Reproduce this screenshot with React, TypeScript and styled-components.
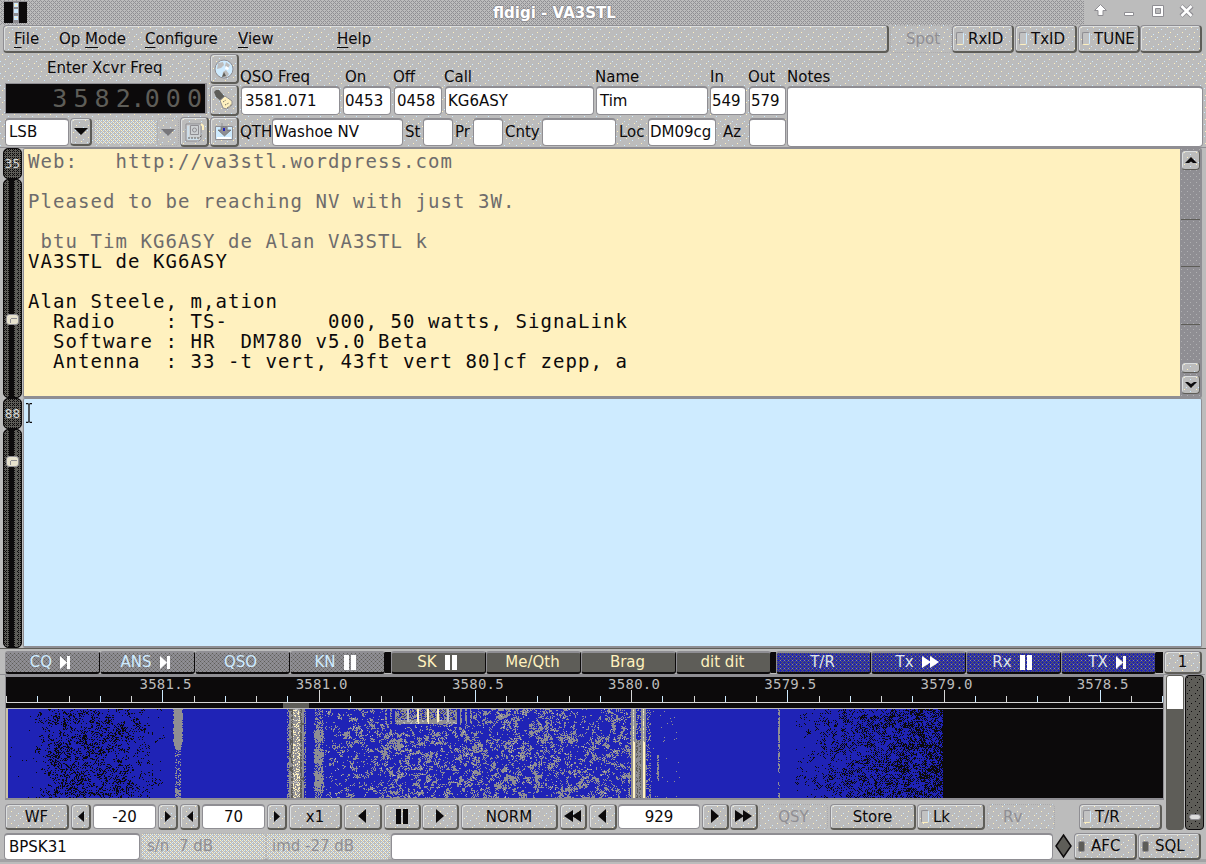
import React from "react";
import styled, { createGlobalStyle, css } from "styled-components";

const C = {
  face: "#bcbcbc",
  mid: "#8f8e93",
  dark: "#5e5d58",
  black: "#0c0a0b",
  cream: "#fff1bf",
  ice: "#ceebff",
  blue: "#1f23b6",
};

/* one-pixel dot inside an n x n repeating tile */
const dot = (color: string, x: number, y: number, n: number) =>
  `conic-gradient(from 270deg at 1px 1px, ${color} 90deg, transparent 0) ${x}px ${y}px / ${n}px ${n}px`;

const sparkle = [
  dot(C.cream, 2, 1, 12),
  dot(C.ice, 8, 3, 12),
  dot(C.cream, 5, 6, 12),
  dot(C.ice, 0, 8, 12),
  dot(C.cream, 10, 10, 12),
  dot(C.ice, 4, 11, 12),
].join(", ");

const mutedDither = [
  dot(C.cream, 0, 0, 4),
  dot(C.ice, 2, 0, 4),
  dot(C.ice, 0, 2, 4),
  dot(C.cream, 2, 2, 4),
  dot("#dfe3e4", 1, 1, 4),
  dot("#e6e3d6", 3, 3, 4),
].join(", ");

const titleDither = `${dot("#97979a", 0, 0, 4)}, ${dot("#97979a", 2, 2, 4)}, ${dot(C.mid, 1, 1, 2)}`;
const darkDither = `${dot(C.black, 0, 0, 2)}, ${dot(C.black, 1, 1, 4)}`;

const Global = createGlobalStyle`
  * { box-sizing: border-box; }
  body { margin: 0; background: ${C.face}; overflow: hidden; }
`;

const Window = styled.div`
  width: 1206px;
  height: 864px;
  display: flex;
  flex-direction: column;
  overflow: hidden;
  background: ${C.face};
  font: 15px "DejaVu Sans", sans-serif;
  color: ${C.black};
  white-space: pre;
`;

const TitleBar = styled.header`
  height: 25px;
  flex: none;
  display: flex;
  padding-left: 4px;
  background: ${titleDither}, ${C.face};
`;
const AppIcon = styled.svg`
  display: block;
  flex: none;
`;
const Title = styled.h1`
  margin: 0 0 0 466px;
  flex: 1;
  font: bold 15px/27px "DejaVu Sans", sans-serif;
  color: #fff;
  text-shadow: 1px 0 ${C.mid}, -1px 0 ${C.mid}, 0 1px ${C.mid}, 0 -1px ${C.mid};
`;
const WindowControls = styled.div`
  width: 122px;
  background: ${C.face};
`;

const raised = css`
  border: 1px solid ${C.mid};
  border-right: 2px solid ${C.dark};
  border-bottom: 2px solid ${C.dark};
  border-radius: 4px;
  box-shadow: inset 1px 1px 0 #dcdfe0;
  background: ${sparkle}, ${C.face};
`;

const MenuRow = styled.nav`
  height: 28px;
  flex: none;
  display: flex;
  padding-left: 3px;
`;
const MenuBar = styled.div`
  ${raised}
  width: 886px;
  margin-right: 1px;
  display: flex;
  line-height: 27px;
`;
const MenuItem = styled.span<{ $w: number }>`
  width: ${(p) => p.$w}px;
  u {
    text-underline-offset: 3px;
    text-decoration-thickness: 1px;
    text-decoration-skip-ink: none;
  }
`;

const Button = styled.button<{
  $w: number;
  $ml?: number;
  $h?: number;
  $disabled?: boolean;
  $left?: boolean;
}>`
  ${raised}
  width: ${(p) => p.$w}px;
  height: ${(p) => p.$h ?? 26}px;
  margin: 0 0 0 ${(p) => p.$ml ?? 2}px;
  padding: 0 0 0 ${(p) => (p.$left ? 3 : 0)}px;
  flex: none;
  display: flex;
  align-items: center;
  justify-content: ${(p) => (p.$left ? "flex-start" : "center")};
  gap: 4px;
  font: 15px "DejaVu Sans", sans-serif;
  color: ${C.black};
  ${(p) =>
    p.$disabled &&
    css`
      color: ${C.mid};
      border: 1px dotted #a9a9ab;
      box-shadow: none;
    `}
`;
const Led = styled.i<{ $on?: boolean; $off?: boolean }>`
  width: 8px;
  height: 13px;
  border: 1px solid ${C.mid};
  border-right-color: ${C.ice};
  border-bottom-color: ${C.cream};
  border-radius: 2px;
  background: #c2c2c2;
  ${(p) => p.$on && `width: 7px; height: 11px; margin-right: 2px; border-color: ${C.mid}; background: ${C.dark};`}
  ${(p) => p.$off && "background: none; border-color: transparent;"}
`;

const TopPanel = styled.section`
  height: 95px;
  flex: none;
  display: flex;
  padding-left: 5px;
  background: linear-gradient(${C.mid}, ${C.mid}) 0 94px / 100% 1px no-repeat, ${sparkle}, ${C.face};
`;
const Column = styled.div<{ $w: number; $ml?: number; $pt?: number }>`
  width: ${(p) => p.$w}px;
  margin-left: ${(p) => p.$ml ?? 0}px;
  padding-top: ${(p) => p.$pt ?? 0}px;
  flex: none;
  display: flex;
  flex-direction: column;
`;
const Row = styled.div<{ $h: number; $mt?: number }>`
  height: ${(p) => p.$h}px;
  margin-top: ${(p) => p.$mt ?? 0}px;
  flex: none;
  display: flex;
  align-items: center;
`;
const Label = styled.span<{ $w: number; $ml?: number }>`
  width: ${(p) => p.$w}px;
  margin-left: ${(p) => p.$ml ?? 0}px;
  flex: none;
  line-height: 20px;
`;
const Field = styled.div<{
  $w: number;
  $ml?: number;
  $h?: number;
  $center?: boolean;
  $muted?: boolean;
  $pad?: number;
}>`
  width: ${(p) => p.$w}px;
  height: ${(p) => p.$h ?? 28}px;
  margin-left: ${(p) => p.$ml ?? 2}px;
  padding-left: ${(p) => (p.$center ? 0 : (p.$pad ?? 3))}px;
  padding-bottom: 1px;
  flex: none;
  display: flex;
  align-items: center;
  justify-content: ${(p) => (p.$center ? "center" : "flex-start")};
  border: 1px solid ${C.mid};
  border-top: 2px solid ${C.mid};
  border-radius: 4px;
  background: #fff;
  ${(p) =>
    p.$muted &&
    css`
      color: ${C.mid};
      border: 1px dotted #b0b0b2;
      background: ${mutedDither}, ${C.face};
    `}
`;
const FreqDisplay = styled.div`
  height: 31px;
  display: flex;
  justify-content: flex-end;
  align-items: center;
  border: 1px solid ${C.mid};
  border-right: 2px solid ${C.mid};
  background: ${C.black};
  color: ${C.dark};
  font: 25px/28px "DejaVu Sans Mono", monospace;
`;
const Digit = styled.span<{ $w: number }>`
  width: ${(p) => p.$w}px;
  display: flex;
  justify-content: center;
`;

const PaneRow = styled.section<{ $h: number }>`
  height: ${(p) => p.$h}px;
  flex: none;
  display: flex;
  padding: 0 4px 0 3px;
`;
const SliderColumn = styled.div`
  width: 20px;
  padding-right: 1px;
  display: flex;
  flex-direction: column;
`;
const SliderValue = styled.div`
  height: 31px;
  flex: none;
  display: flex;
  align-items: center;
  justify-content: center;
  border: 1px solid ${C.black};
  border-radius: 5px;
  background: ${darkDither}, ${C.dark};
  color: #d9d9d6;
  font-size: 12px;
`;
const SliderTrack = styled.div<{ $at: number }>`
  flex: 1;
  padding-top: ${(p) => p.$at}px;
  display: flex;
  justify-content: center;
  border: 1px solid ${C.black};
  border-radius: 5px;
  background: linear-gradient(${C.black}, ${C.black}) 5px 0 / 5px 100% no-repeat,
    linear-gradient(${C.dark}, ${C.dark}) 11px 0 / 2px 100% no-repeat, ${darkDither}, ${C.dark};
`;
const SliderKnob = styled.div`
  width: 13px;
  height: 11px;
  flex: none;
  border: 1px solid ${C.mid};
  border-radius: 3px;
  background: linear-gradient(${C.mid}, ${C.mid}) 4px 3px / 6px 1px no-repeat,
    linear-gradient(${C.mid}, ${C.mid}) 3px 4px / 1px 4px no-repeat, #e6e1cd;
`;

const Pane = styled.div<{ $bg: string }>`
  flex: 1;
  display: flex;
  border: 1px solid ${C.mid};
  border-bottom: 2px solid ${C.mid};
  border-radius: 2px;
  background: ${(p) => p.$bg};
`;
const Log = styled.pre`
  flex: 1;
  margin: 0;
  padding: 2px 0 0 4px;
  font: 19px/20px "DejaVu Sans Mono", monospace;
  letter-spacing: 1.06px;
`;
const Sent = styled.span`
  color: #6e6c6c;
`;
const ScrollBar = styled.div`
  width: 21px;
  padding: 1px 1px 1px 1px;
  display: flex;
  flex-direction: column;
  background: ${dot("#b0b0b2", 1, 0, 6)}, ${dot("#b0b0b2", 4, 3, 6)}, ${C.mid};
`;
const ScrollButton = styled.div<{ $h: number }>`
  ${raised}
  border-right-width: 1px;
  border-bottom-width: 1px;
  height: ${(p) => p.$h}px;
  flex: none;
  display: flex;
  align-items: center;
  justify-content: center;
`;
const ScrollSegment = styled.div<{ $h: number; $line?: boolean }>`
  height: ${(p) => p.$h}px;
  flex: none;
  border-bottom: ${(p) => (p.$line ? `1px solid ${C.dark}` : "0")};
`;
const Caret = styled.svg`
  margin: 4px 0 0 1px;
`;

const MacroRow = styled.section`
  height: 27px;
  flex: none;
  display: flex;
  align-items: center;
  padding: 0 0 0 5px;
  border-top: 1px solid ${C.dark};
  background: linear-gradient(${C.mid}, ${C.mid}) 0 100% / 1205px 1px no-repeat, ${C.face};
`;
const MacroGroup = styled.div`
  width: 380px;
  height: 23px;
  display: flex;
`;
const GroupGap = styled.div<{ $w: number }>`
  width: ${(p) => p.$w}px;
  height: 21px;
  background: ${C.black};
`;
const macroFill = {
  gray: `${dot(C.dark, 0, 0, 4)}, ${dot(C.dark, 2, 2, 4)}, ${dot("#7d7c80", 1, 1, 2)}, ${C.mid}`,
  dark: C.dark,
  blue: `${dot(C.dark, 0, 0, 2)}, ${dot(C.dark, 1, 1, 4)}, ${dot(C.mid, 3, 3, 4)}, ${C.blue}`,
};
const Macro = styled.button<{ $tone: "gray" | "dark" | "blue" }>`
  flex: 1 0 0;
  padding: 0 ${(p) => (p.$tone === "gray" ? 4 : 2)}px 0 0;
  display: flex;
  align-items: center;
  justify-content: center;
  gap: 8px;
  border: 1px solid ${C.mid};
  border-top: 2px solid ${C.mid};
  border-right-color: ${C.black};
  border-bottom: 2px solid ${C.black};
  border-radius: 3px;
  background: ${(p) => macroFill[p.$tone]};
  color: ${(p) => (p.$tone === "gray" ? C.ice : p.$tone === "dark" ? C.cream : "#dfe3ea")};
  font: 15px "DejaVu Sans", sans-serif;
`;

const Bottom = styled.section`
  height: 156px;
  flex: none;
  display: flex;
  padding-left: 5px;
`;
const BottomMain = styled.div`
  width: 1159px;
  display: flex;
  flex-direction: column;
`;
const WaterfallSvg = styled.svg`
  display: block;
  flex: none;
`;
const ControlRow = styled.div`
  height: 26px;
  margin-top: 4px;
  display: flex;
`;
const SignalMeter = styled.div`
  width: 18px;
  height: 155px;
  margin-left: 2px;
  border: 1px solid ${C.dark};
  border-radius: 3px;
  background: linear-gradient(#fff 33px, ${C.dark} 33px);
`;
const SquelchSlider = styled.div`
  width: 19px;
  height: 155px;
  margin-left: 1px;
  padding-top: 138px;
  display: flex;
  justify-content: center;
  border: 1px solid ${C.black};
  border-radius: 4px;
  background: ${dot(C.black, 1, 1, 8)}, ${dot(C.black, 5, 3, 8)}, ${dot(C.black, 3, 6, 8)}, ${C.dark};
`;
const SquelchKnob = styled.div`
  width: 12px;
  height: 6px;
  border: 1px solid ${C.mid};
  border-radius: 3px;
  background: #dcdcdc;
`;
const StatusRow = styled.footer`
  height: 31px;
  flex: none;
  display: flex;
  padding: 2px 0 0 4px;
  border-bottom: 3px solid #a3a3a5;
`;

/* ---------- glyphs ---------- */
const glyphs: Record<string, [number, string]> = {
  back: [11, "M9 0V14L1 7Z"],
  fwd: [11, "M1 0V14L9 7Z"],
  smallBack: [6, "M6 2V13L0 7.5Z"],
  smallFwd: [6, "M0 2V13L6 7.5Z"],
  rewind: [18, "M9 1V13L0 7ZM17 1V13L8 7Z"],
  forward: [18, "M0 1V13L9 7ZM8 1V13L17 7Z"],
  pause: [13, "M0 0H5V15H0ZM7 0H12V15H7Z"],
  step: [11, "M0 1V14L7 7.5ZM7 1H10V14H7Z"],
  down: [14, "M0 4H14L7 11Z"],
  caretUp: [14, "M1 10L7 4L13 10H9L7 8.500L5 10Z"],
  caretDown: [14, "M1 5H4L7 7L10 5H13L7 11Z"],
};
const Glyph = ({ name, color = C.black }: { name: string; color?: string }) => {
  const [w, d] = glyphs[name];
  return (
    <svg width={w} height={15} viewBox={`0 0 ${w} 15`} fill={color}>
      <path d={d} />
    </svg>
  );
};

const GlobeIcon = () => (
  <svg width="20" height="20" viewBox="0 0 20 20">
    <circle cx="10" cy="10" r="9" fill={C.ice} stroke={C.mid} />
    <path d="M4 4l5-1 1 3-3 3-4 1zM12 3l4 3-2 3-3-2zM8 18l1-5 3-2 3 4-2 3z" fill={C.face} />
    <path d="M8 18l2-5 2 4z" fill={C.dark} />
    <path d="M12 7l3 2-1 2-3-1z" fill="#fff" />
  </svg>
);
const BrushIcon = () => (
  <svg width="20" height="20" viewBox="0 0 20 20">
    <path d="M0 2l2-2h3l6 7-4 4-5-4z" fill={C.dark} />
    <path d="M6 10.500l5-4.500 7 5v4l-5 4-4-1z" fill={C.cream} stroke={C.mid} />
    <path d="M9 12l3-2M11 15l4-2M13 18l5-4" stroke={C.dark} strokeDasharray="1 1" />
  </svg>
);
const ContactIcon = () => (
  <svg width="20" height="20" viewBox="0 0 20 20" fill="none">
    <path d="M2 2h15v15l-2 2H2z" fill="#cdd0d2" stroke={C.mid} />
    <path d="M4 4v13h10" stroke={C.ice} />
    <path d="M6.500 12.500v-9h8v9z" stroke={C.mid} />
    <circle cx="10.500" cy="8" r="2" stroke={C.mid} />
    <path d="M17 2l2 2v4" stroke={C.cream} strokeWidth="2" />
    <path d="M4 16h11l3-3" stroke={C.dark} strokeDasharray="2 1" />
  </svg>
);
const SaveIcon = () => (
  <svg width="20" height="20" viewBox="0 0 20 20">
    <path d="M1.500 4.500h17v13h-17z" fill={C.ice} stroke={C.mid} />
    <path d="M4 8h3v-3h6v3h4l-6.500 6z" fill={C.mid} stroke={C.dark} strokeWidth=".6" />
    <path d="M8 1v5l2 2v-3h3v3" fill="none" stroke={C.mid} />
    <path d="M9 6h2v3h-2z" fill={C.blue} />
    <path d="M3 15h14v2H3z" fill="#fff" />
  </svg>
);

/* ---------- waterfall ---------- */
const hash = (x: number, y: number, s: number) => {
  let h = (x * 374761393 + y * 668265263 + s * 974634777) | 0;
  h = Math.imul(h ^ (h >>> 13), 1274126177);
  return ((h ^ (h >>> 16)) >>> 0) / 4294967296;
};
const smooth = (x: number, y: number, scale: number, s: number) => {
  const fx = x / scale;
  const fy = y / scale;
  const ix = Math.floor(fx);
  const iy = Math.floor(fy);
  const tx = fx - ix;
  const ty = fy - iy;
  const top = hash(ix, iy, s) * (1 - tx) + hash(ix + 1, iy, s) * tx;
  const low = hash(ix, iy + 1, s) * (1 - tx) + hash(ix + 1, iy + 1, s) * tx;
  return top * (1 - ty) + low * ty;
};

const pixelAt = (x: number, y: number): string | null => {
  const r = hash(x, y, 1);
  const clump = smooth(x, y, 2.6, 2) * 0.45 + smooth(x, y, 6.3, 9) * 0.25 + r * 0.3;
  if (x < 165) {
    if (x < 35) return r > 0.996 ? C.black : null;
    const level = x < 48 ? 0.2 : x < 115 ? 0.37 : 0.37 - ((x - 115) / 50) * 0.22;
    return smooth(x, y, 4, 4) * 0.4 + r * 0.6 < level ? C.black : null;
  }
  if (x >= 172 && x <= 182) {
    const d = Math.abs(x - 177.5);
    if (y < 30) return d < 4 + r ? C.mid : null;
    if (y < 41) return d < 4.5 - (y - 30) / 4 + r ? C.mid : null;
    if (y > 80) return d < 3 && r > 0.2 ? C.mid : null;
    return d < 3 && r > 0.7 ? C.mid : null;
  }
  if (x >= 287 && x <= 305) {
    const d = Math.abs(x - 296);
    if (d < 3.5 && r > (y < 15 ? 0.8 : 0.68)) return C.cream;
    if (d < 4) return r < 0.1 ? C.face : C.mid;
    if (d < 6) return r > 0.25 ? C.dark : C.mid;
    if (d < 8) return smooth(x, y, 5, 8) > 0.3 ? C.mid : C.dark;
    return r > 0.6 ? C.mid : null;
  }
  if (x >= 313 && x <= 324) {
    const block = (y > 20 && y < 34) || (y > 39 && y < 54) || (y > 60 && y < 82);
    return Math.abs(x - 318.5) < (block ? 3.6 : 2.6) + r * 2 && (block ? r > 0.1 : r > 0.5) ? C.mid : null;
  }
  if (x >= 384 && x <= 472 && y < 15) {
    if (x >= 396 && x < 457) {
      const k = (x - 407) % 10;
      if (k === 1 && x > 416 && x < 432) return C.cream;
      if ((k === 1 || k === 0) && x > 400 && y < 13) return x > 416 && x < 442 ? C.cream : C.face;
      if (y > 10) return r > 0.15 ? C.mid : C.face;
      return r > 0.45 ? C.mid : r > 0.3 ? C.dark : null;
    }
    return x % 5 < 2 && r > 0.2 ? C.mid : null;
  }
  if (x >= 630 && x <= 650) {
    const d1 = Math.abs(x - 633);
    const d2 = Math.abs(x - 643);
    if (d1 < 1 || d2 < 1) return y > 32 || r > 0.55 ? C.cream : C.face;
    if (x === 634 || x === 644) return y > 32 ? C.cream : C.mid;
    if (d1 <= 2 || d2 <= 2) return C.mid;
    if (x > 635 && x < 641 && y > 30) return x === 638 ? C.mid : r > 0.5 ? C.dark : C.mid;
    return r > 0.72 ? C.mid : null;
  }
  if (x > 324 && x < 630) {
    const level = x < 345 ? 0.66 : x < 380 ? 0.61 : x < 560 ? 0.58 : 0.6;
    const patch = (Math.hypot(x - 394, y - 34) < 6 || Math.hypot(x - 477, y - 38) < 6) && r > 0.3;
    if (patch || clump > level) return r > 0.985 ? C.face : C.mid;
    return r > 0.985 ? C.mid : null;
  }
  if (x > 650 && x < 680) {
    if (x >= 657 && x <= 658 && y > 45 && y < 72) return r > 0.3 ? C.mid : null;
    return r > 0.99 ? C.mid : null;
  }
  if (x >= 778 && x <= 779) return (y < 63 || y > 83) && r > 0.25 ? C.mid : r > 0.8 ? C.mid : null;
  if (x >= 795 && x < 943) {
    const t = (x - 795) / 148;
    const checker = (x + y) % 2 ? 0.08 : -0.08;
    return smooth(x, y, 4, 6) * 0.45 + r * 0.55 + checker < 0.15 + Math.pow(t, 0.7) * 0.34 ? C.black : null;
  }
  return null;
};

const buildSpectrum = () => {
  const paths: Record<string, string> = {};
  for (let y = 0; y < 89; y++) {
    let start = 8;
    let color: string | null = null;
    for (let x = 8; x <= 943; x++) {
      const next = x < 943 ? pixelAt(x, y) : null;
      if (next !== color) {
        if (color) paths[color] = (paths[color] ?? "") + `M${start} ${y}h${x - start}v1H${start}z`;
        start = x;
        color = next;
      }
    }
  }
  return Object.entries(paths);
};
const spectrum = buildSpectrum();

const marks = ["3581.5", "3581.0", "3580.5", "3580.0", "3579.5", "3579.0", "3578.5"];

const Waterfall = () => (
  <WaterfallSvg width="1159" height="125" viewBox="5 675 1159 125" shapeRendering="crispEdges">
    <rect x="5" y="675" width="1159" height="125" fill={C.mid} />
    <rect x="6" y="677" width="1157" height="31" fill={C.black} />
    <rect x="6" y="702" width="1157" height="1" fill="#d6d6d6" />
    {Array.from({ length: 38 }, (_, i) => {
      const major = i % 5 === 0 && i > 0;
      return (
        <rect
          key={i}
          x={Math.round(6 + i * 31.25)}
          y={major ? 690 : 696}
          width="1"
          height={major ? 12 : 6}
          fill={i % 2 ? C.ice : "#d6d6d6"}
        />
      );
    })}
    {marks.map((m, i) => (
      <text
        key={m}
        x={139.5 + i * 156.2}
        y="689"
        fill="#bcbcbc"
        fontFamily="DejaVu Sans Mono, monospace"
        fontSize="14"
        letterSpacing=".25"
      >
        {m}
      </text>
    ))}
    <rect x="283" y="703" width="26" height="6" fill={C.dark} />
    <rect x="6" y="708" width="1157" height="1" fill={C.face} />
    <rect x="6" y="709" width="1157" height="89" fill={C.black} />
    <rect x="6" y="709" width="2" height="89" fill="#c9c2a5" />
    <rect x="8" y="709" width="935" height="89" fill={C.blue} />
    <g transform="translate(0 709)">
      {spectrum.map(([color, d]) => (
        <path key={color} d={d} fill={color} />
      ))}
    </g>
  </WaterfallSvg>
);

type Part = [string, string?];
const grayMacros: Part[] = [["CQ", "step"], ["ANS", "step"], ["QSO"], ["KN", "pause"]];
const darkMacros: Part[] = [["SK", "pause"], ["Me/Qth"], ["Brag"], ["dit dit"]];
const blueMacros: Part[] = [["T/R"], ["Tx", "forward"], ["Rx", "pause"], ["TX", "step"]];

const Macros = ({ items, tone }: { items: Part[]; tone: "gray" | "dark" | "blue" }) => (
  <MacroGroup>
    {items.map(([label, icon]) => (
      <Macro key={label} $tone={tone}>
        {label}
        {icon && <Glyph name={icon} color="#fff" />}
      </Macro>
    ))}
  </MacroGroup>
);

export default function App() {
  return (
    <Window>
      <Global />
      <TitleBar>
        <AppIcon width="23" height="24" viewBox="0 0 23 24">
          <path d="M0 1h23v22H0z" fill={C.black} />
          <path d="M0 1h23v1H0z" fill={C.mid} />
          <path d="M9 2h6v21H9z" fill={C.mid} />
          <path d="M10 3h4v4h-4zM10 9h4v4h-4zM10 16h4v4h-4z" fill={C.ice} />
          <path d="M11 4h2v2h-2zM11 17h2v1h-2z" fill={C.cream} />
        </AppIcon>
        <Title>fldigi - VA3STL</Title>
        <WindowControls>
          <svg width="122" height="24" viewBox="1084 0 122 24">
            <g fill="#fff" stroke={C.mid}>
              <path d="M1100.500 4.500l6 6h-3.500v5h-5v-5h-3.500z" />
              <path d="M1124.500 12.500h9v3h-9z" />
              <path d="M1152.500 5.500h11v11h-11zM1155.500 8.500v5h5v-5z" fillRule="evenodd" />
            </g>
            <path d="M1181 6l11 10M1192 6l-11 10" stroke={C.mid} strokeWidth="4.500" />
            <path d="M1181.500 6l10 10M1191.500 6l-10 10" stroke="#fff" strokeWidth="2.500" />
          </svg>
        </WindowControls>
      </TitleBar>

      <MenuRow>
        <MenuBar>
          <MenuItem $w={10} />
          <MenuItem $w={45}><u>F</u>ile</MenuItem>
          <MenuItem $w={86}>Op <u>M</u>ode</MenuItem>
          <MenuItem $w={93}><u>C</u>onfigure</MenuItem>
          <MenuItem $w={99}><u>V</u>iew</MenuItem>
          <MenuItem $w={60}><u>H</u>elp</MenuItem>
        </MenuBar>
        <Button $w={62} $h={28} $ml={0} $disabled $left><Led $off />Spot</Button>
        <Button $w={62} $h={28} $ml={0} $left><Led />RxID</Button>
        <Button $w={62} $h={28} $ml={1} $left><Led />TxID</Button>
        <Button $w={62} $h={28} $ml={1} $left><Led />TUNE</Button>
        <Button $w={62} $h={28} $ml={0} />
      </MenuRow>

      <TopPanel>
        <Column $w={202} $pt={5}>
          <Row $h={20}><Label $w={130} $ml={42}>Enter Xcvr Freq</Label></Row>
          <Row $h={5} />
          <FreqDisplay>
            {"3582.000".split("").map((d, i) => (
              <Digit key={i} $w={d === "." ? 8 : 21.1}>{d}</Digit>
            ))}
          </FreqDisplay>
          <Row $h={30} $mt={3}>
            <Field $w={64} $ml={0}>LSB</Field>
            <Button $w={22} $h={28} $ml={1}><Glyph name="down" /></Button>
            <Field $w={62} $h={26} $ml={2} $muted />
            <Button $w={22} $h={28} $ml={1} $disabled><Glyph name="down" color="#77767a" /></Button>
            <Button $w={29} $h={30} $ml={1}><ContactIcon /></Button>
          </Row>
        </Column>
        <Column $w={29} $ml={3} $pt={1}>
          <Button $w={29} $h={30} $ml={0}><GlobeIcon /></Button>
          <Row $h={1} />
          <Button $w={29} $h={31} $ml={0}><BrushIcon /></Button>
          <Row $h={1} />
          <Button $w={29} $h={30} $ml={0}><SaveIcon /></Button>
        </Column>
        <Column $w={546} $ml={1} $pt={14}>
          <Row $h={20}>
            <Label $w={105}>QSO Freq</Label>
            <Label $w={48}>On</Label>
            <Label $w={51}>Off</Label>
            <Label $w={151}>Call</Label>
            <Label $w={115}>Name</Label>
            <Label $w={38}>In</Label>
            <Label $w={38}>Out</Label>
          </Row>
          <Row $h={29} $mt={-1}>
            <Field $w={99} $h={29} $ml={1} $pad={3}>3581.071</Field>
            <Field $w={48} $h={29} $ml={3} $pad={1}>0453</Field>
            <Field $w={48} $h={29} $ml={3} $pad={2}>0458</Field>
            <Field $w={149} $h={29} $ml={3} $pad={2}>KG6ASY</Field>
            <Field $w={112} $h={29}>Tim</Field>
            <Field $w={36} $h={29} $pad={1}>549</Field>
            <Field $w={37} $h={29} $ml={3} $pad={1}>579</Field>
          </Row>
          <Row $h={30} $mt={2}>
            <Label $w={32}>QTH</Label>
            <Field $w={131} $ml={0} $pad={1}>Washoe NV</Field>
            <Label $w={18} $ml={2}>St</Label>
            <Field $w={30} $ml={0} />
            <Label $w={18} $ml={2}>Pr</Label>
            <Field $w={30} $ml={0} />
            <Label $w={38} $ml={2}>Cnty</Label>
            <Field $w={74} $ml={-1} />
            <Label $w={29} $ml={3}>Loc</Label>
            <Field $w={68} $ml={0} $pad={1}>DM09cg</Field>
            <Label $w={26} $ml={7}>Az</Label>
            <Field $w={37} $ml={0} />
          </Row>
        </Column>
        <Column $w={418} $ml={1} $pt={14}>
          <Row $h={19}><Label $w={60}>Notes</Label></Row>
          <Field $w={416} $h={61} $ml={0} />
        </Column>
      </TopPanel>

      <PaneRow $h={250}>
        <SliderColumn>
          <SliderValue>35</SliderValue>
          <SliderTrack $at={134}><SliderKnob /></SliderTrack>
        </SliderColumn>
        <Pane $bg={C.cream}>
          <Log>
            <Sent>{"Web:   http://va3stl.wordpress.com\n\nPleased to be reaching NV with just 3W.\n\n btu Tim KG6ASY de Alan VA3STL k\n"}</Sent>
            {"VA3STL de KG6ASY\n\nAlan Steele, m,ation\n  Radio    : TS-        000, 50 watts, SignaLink\n  Software : HR  DM780 v5.0 Beta\n  Antenna  : 33 -t vert, 43ft vert 80]cf zepp, a"}
          </Log>
          <ScrollBar>
            <ScrollButton $h={20}><Glyph name="caretUp" /></ScrollButton>
            <ScrollSegment $h={50} $line />
            <ScrollSegment $h={47} $line />
            <ScrollSegment $h={58} $line />
            <ScrollSegment $h={37} />
            <ScrollButton $h={11} />
            <ScrollSegment $h={2} />
            <ScrollButton $h={19}><Glyph name="caretDown" /></ScrollButton>
          </ScrollBar>
        </Pane>
      </PaneRow>

      <PaneRow $h={250}>
        <SliderColumn>
          <SliderValue>88</SliderValue>
          <SliderTrack $at={26}><SliderKnob /></SliderTrack>
        </SliderColumn>
        <Pane $bg={C.ice}>
          <Caret width="8" height="20" viewBox="0 0 8 20" fill="none" stroke={C.black}>
            <path d="M1 .500h2.500M4.500 .500H7M4 1v18M1 19.500h2.500M4.500 19.500H7" strokeWidth="1.300" />
          </Caret>
        </Pane>
      </PaneRow>

      <MacroRow>
        <Macros items={grayMacros} tone="gray" />
        <GroupGap $w={6} />
        <Macros items={darkMacros} tone="dark" />
        <GroupGap $w={5} />
        <Macros items={blueMacros} tone="blue" />
        <GroupGap $w={7} />
        <Button $w={38} $h={23} $ml={1}>1</Button>
      </MacroRow>

      <Bottom>
        <BottomMain>
          <Waterfall />
          <ControlRow>
            <Button $w={64} $ml={0}>WF</Button>
            <Button $w={20}><Glyph name="smallBack" /></Button>
            <Field $w={63} $h={25} $center>-20</Field>
            <Button $w={20}><Glyph name="smallFwd" /></Button>
            <Button $w={20}><Glyph name="smallBack" /></Button>
            <Field $w={63} $h={25} $center>70</Field>
            <Button $w={20}><Glyph name="smallFwd" /></Button>
            <Button $w={53}>x1</Button>
            <Button $w={38}><Glyph name="back" /></Button>
            <Button $w={37}><Glyph name="pause" /></Button>
            <Button $w={37} $ml={1}><Glyph name="fwd" /></Button>
            <Button $w={97}>NORM</Button>
            <Button $w={27}><Glyph name="rewind" /></Button>
            <Button $w={28}><Glyph name="back" /></Button>
            <Field $w={82} $h={25} $ml={1} $center>929</Field>
            <Button $w={27}><Glyph name="fwd" /></Button>
            <Button $w={28} $ml={1}><Glyph name="forward" /></Button>
            <Button $w={69} $ml={1} $disabled>QSY</Button>
            <Button $w={86}>Store</Button>
            <Button $w={68} $ml={1} $left><Led />Lk</Button>
            <Button $w={68} $disabled $left><Led $off />Rv</Button>
            <Button $w={83} $ml={24} $left><Led />T/R</Button>
          </ControlRow>
        </BottomMain>
        <SignalMeter />
        <SquelchSlider><SquelchKnob /></SquelchSlider>
      </Bottom>

      <StatusRow>
        <Field $w={136} $h={27} $ml={0} $pad={4}>BPSK31</Field>
        <Field $w={125} $h={27} $ml={1} $pad={5} $muted>s/n  7 dB</Field>
        <Field $w={124} $h={27} $ml={0} $pad={5} $muted>imd -27 dB</Field>
        <Field $w={662} $h={27} $ml={1} />
        <svg width="22" height="26" viewBox="1053 834 22 26">
          <path d="M1063.500 836l7.500 11-7.500 11-7.500-11z" fill={C.dark} stroke={C.black} strokeWidth="1.500" />
        </svg>
        <Button $w={63} $h={27} $ml={-1} $left><Led $on />AFC</Button>
        <Button $w={63} $h={27} $ml={1} $left><Led $on />SQL</Button>
      </StatusRow>
    </Window>
  );
}
